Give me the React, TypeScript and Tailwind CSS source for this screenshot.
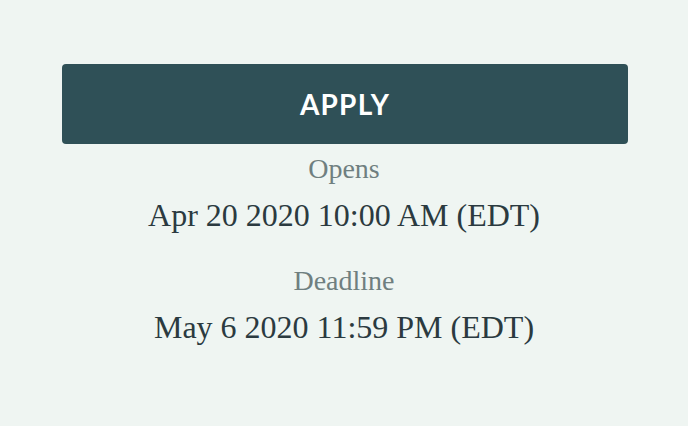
export default function App() {
  return (
    <div className="w-[688px] h-[426px] bg-[#eff5f2] flex flex-col items-center pt-[64px]">
      <button className="w-[566px] h-[80px] ml-[2px] bg-[#2f5057] rounded-[4px] text-white text-[28px] font-bold tracking-[1.2px] flex items-center justify-center" style={{ fontFamily: "Lato, 'Open Sans', sans-serif" }}>
        APPLY
      </button>
      <div className="flex flex-col items-center" style={{ fontFamily: "'Liberation Serif', serif" }}>
        <div className="text-[28px] text-[#6f7f80] mt-[7px] leading-[36px]">Opens</div>
        <div className="text-[32px] text-[#2b3a40] leading-[56px]">Apr 20 2020 10:00 AM (EDT)</div>
        <div className="text-[28px] text-[#6f7f80] mt-[20px] leading-[36px]">Deadline</div>
        <div className="text-[32px] text-[#2b3a40] leading-[56px]">May 6 2020 11:59 PM (EDT)</div>
      </div>
    </div>
  );
}
